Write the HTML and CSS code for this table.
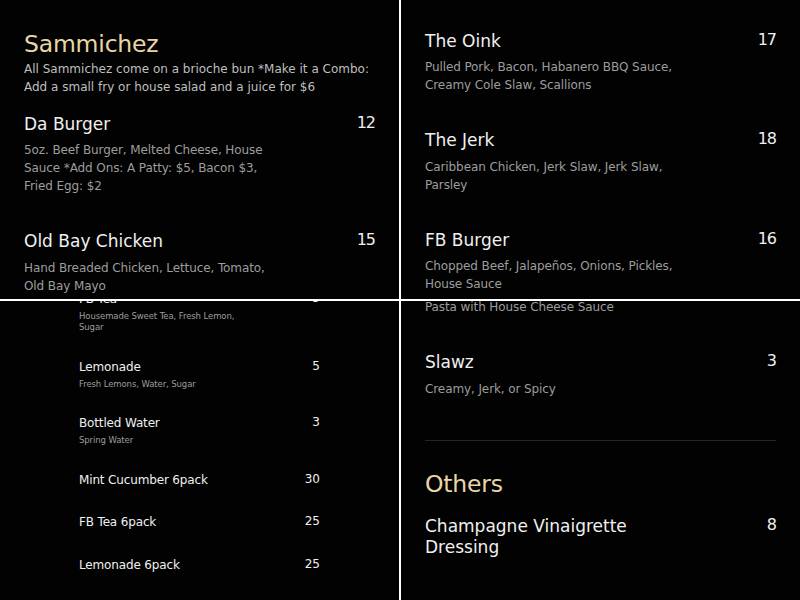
FILE: index.html
```html
<!DOCTYPE html>
<html lang="en">
<head>
<meta charset="utf-8">
<title>Menu</title>
<link rel="stylesheet" href="styles.css">
</head>
<body>
<main class="collage">
  <section class="tile">
    <div class="page page-wide page-a">
      <h2 class="section-title">Sammichez</h2>
      <p class="section-note">All Sammichez come on a brioche bun *Make it a Combo:<br>Add a small fry or house salad and a juice for $6</p>
      <div class="items items-a">
        <article class="item">
          <h3 class="item-name">Da Burger</h3>
          <span class="item-price">12</span>
          <p class="item-desc">5oz. Beef Burger, Melted Cheese, House<br>Sauce *Add Ons: A Patty: $5, Bacon $3,<br>Fried Egg: $2</p>
        </article>
        <article class="item">
          <h3 class="item-name">Old Bay Chicken</h3>
          <span class="item-price">15</span>
          <p class="item-desc">Hand Breaded Chicken, Lettuce, Tomato,<br>Old Bay Mayo</p>
        </article>
      </div>
    </div>
  </section>

  <section class="tile">
    <div class="page page-wide page-b">
      <div class="items">
        <article class="item">
          <h3 class="item-name">The Oink</h3>
          <span class="item-price">17</span>
          <p class="item-desc">Pulled Pork, Bacon, Habanero BBQ Sauce,<br>Creamy Cole Slaw, Scallions</p>
        </article>
        <article class="item">
          <h3 class="item-name">The Jerk</h3>
          <span class="item-price">18</span>
          <p class="item-desc">Caribbean Chicken, Jerk Slaw, Jerk Slaw,<br>Parsley</p>
        </article>
        <article class="item">
          <h3 class="item-name">FB Burger</h3>
          <span class="item-price">16</span>
          <p class="item-desc">Chopped Beef, Jalapeños, Onions, Pickles,<br>House Sauce</p>
        </article>
      </div>
    </div>
  </section>

  <section class="tile">
    <div class="page page-narrow">
      <div class="items items-narrow">
        <article class="item">
          <h3 class="item-name">FB Tea</h3>
          <span class="item-price">5</span>
          <p class="item-desc">Housemade Sweet Tea, Fresh Lemon,<br>Sugar</p>
        </article>
        <article class="item">
          <h3 class="item-name">Lemonade</h3>
          <span class="item-price">5</span>
          <p class="item-desc">Fresh Lemons, Water, Sugar</p>
        </article>
        <article class="item">
          <h3 class="item-name">Bottled Water</h3>
          <span class="item-price">3</span>
          <p class="item-desc">Spring Water</p>
        </article>
        <article class="item">
          <h3 class="item-name">Mint Cucumber 6pack</h3>
          <span class="item-price">30</span>
        </article>
        <article class="item">
          <h3 class="item-name">FB Tea 6pack</h3>
          <span class="item-price">25</span>
        </article>
        <article class="item">
          <h3 class="item-name">Lemonade 6pack</h3>
          <span class="item-price">25</span>
        </article>
      </div>
    </div>
  </section>

  <section class="tile">
    <div class="page page-wide page-d">
      <div class="items">
        <article class="item item-tail">
          <p class="item-desc">Pasta with House Cheese Sauce</p>
        </article>
        <article class="item">
          <h3 class="item-name">Slawz</h3>
          <span class="item-price">3</span>
          <p class="item-desc">Creamy, Jerk, or Spicy</p>
        </article>
      </div>
      <hr class="divider">
      <h2 class="section-title section-title-d">Others</h2>
      <div class="items">
        <article class="item">
          <h3 class="item-name">Champagne Vinaigrette<br>Dressing</h3>
          <span class="item-price">8</span>
        </article>
      </div>
    </div>
  </section>
</main>
</body>
</html>
```

FILE: styles.css
```css
* {
  box-sizing: border-box;
}

html, body {
  margin: 0;
  padding: 0;
}

body {
  background: #ffffff;
  font-family: "DejaVu Sans", "Open Sans", sans-serif;
  width: 800px;
  height: 600px;
  overflow: hidden;
}

.collage {
  display: grid;
  grid-template-columns: 399px 399px;
  grid-template-rows: 299px 299px;
  gap: 2px;
}

.tile {
  background: #020202;
  overflow: hidden;
}

h2, h3, p {
  margin: 0;
  font-weight: 400;
}

/* ---------- wide page (tiles a, b, d) ---------- */
.page-wide {
  padding: 0 24px;
}

.page-a {
  padding-top: 29px;
}

.page-b {
  padding-top: 30.5px;
}

.page-d {
  margin-top: -3px;
}

.section-title {
  font-size: 23.5px;
  line-height: 30px;
  color: #e8d6a6;
  letter-spacing: -0.2px;
}

.section-note {
  margin-top: 1px;
  font-size: 12px;
  line-height: 18px;
  color: #bfbfbf;
  letter-spacing: 0;
}

.items {
  display: flex;
  flex-direction: column;
  gap: 36px;
}

.items-a {
  margin-top: 17.5px;
}

.item {
  display: grid;
  grid-template-columns: 1fr auto;
  align-items: start;
}

.page-wide .item-name {
  font-size: 17px;
  line-height: 21px;
  color: #f0f0f0;
  letter-spacing: 0;
}

.page-wide .item-price {
  font-size: 16px;
  line-height: 21px;
  color: #f0f0f0;
  margin-top: -2px;
  letter-spacing: -1px;
}

.page-wide .item-desc {
  grid-column: 1 / -1;
  margin-top: 6.5px;
  font-size: 12px;
  line-height: 18px;
  color: #9d9d9d;
  letter-spacing: -0.1px;
}

.page-wide .item-tail .item-desc {
  margin-top: 0;
}

.divider {
  margin: 42px 0 0;
  border: 0;
  height: 1px;
  background: #242424;
}

.section-title-d {
  margin-top: 28px;
  margin-bottom: 17.5px;
}

/* ---------- narrow page (tile c) ---------- */
.page-narrow {
  padding: 0 79px;
}

.items-narrow {
  margin-top: -10px;
  gap: 25.5px;
}

.page-narrow .item-name {
  font-size: 12px;
  line-height: 16px;
  padding-bottom: 1px;
  color: #f0f0f0;
  letter-spacing: -0.15px;
}

.page-narrow .item-price {
  font-size: 12px;
  line-height: 16px;
  margin-top: -1px;
  color: #f0f0f0;
}

.page-narrow .item-desc {
  grid-column: 1 / -1;
  margin-top: 3px;
  font-size: 8.5px;
  line-height: 11px;
  color: #9d9d9d;
  letter-spacing: -0.1px;
}
```
